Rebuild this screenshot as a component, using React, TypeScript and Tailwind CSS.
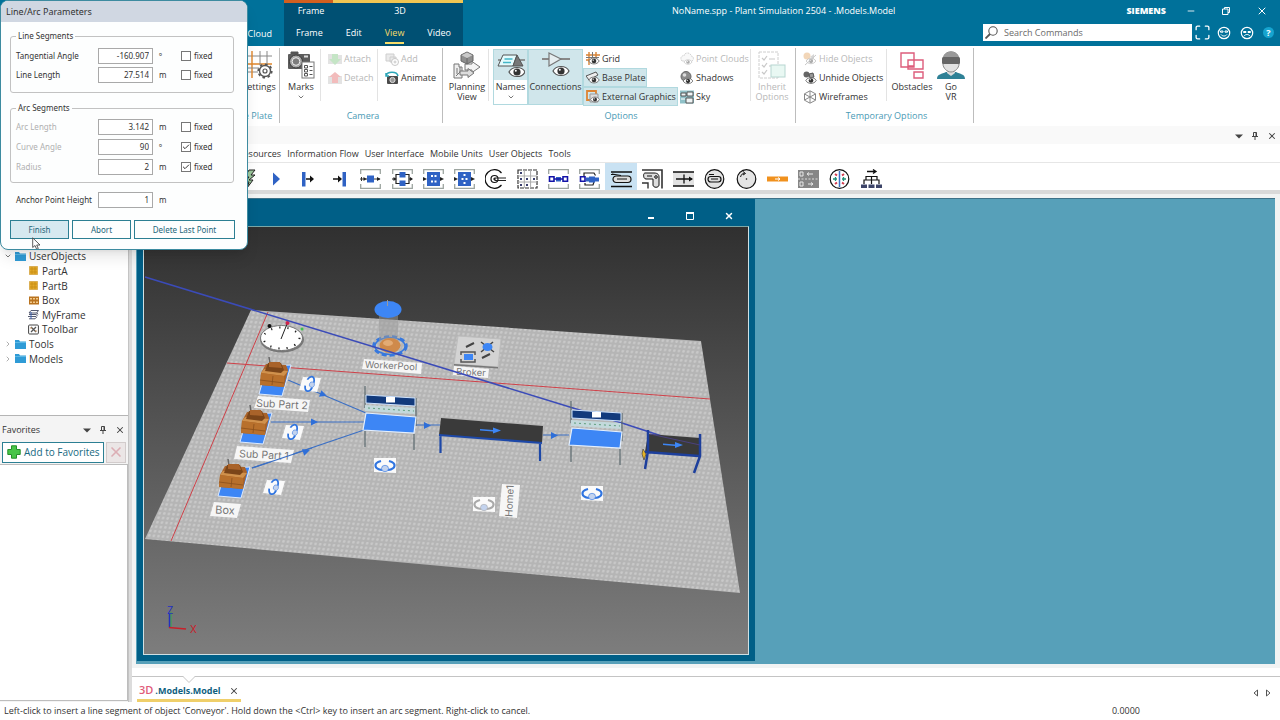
import type { ReactNode } from 'react';
import { Check, ChevronDown, ChevronRight, Maximize, Minus, X } from 'lucide-react';

interface IconProps {
  children: ReactNode;
  className?: string;
  box?: string;
}

const Svg = ({ children, className = 'size-7', box = '0 0 28 28' }: IconProps) => (
  <svg viewBox={box} className={`${className} shrink-0`} fill="none" aria-hidden="true">
    {children}
  </svg>
);

// Eye overlay shared by most of the visibility icons
const Eye = ({ x, y, s = 1 }: { x: number; y: number; s?: number }) => (
  <g transform={`translate(${x} ${y}) scale(${s})`}>
    <path d="M-8 0C-5-6 5-6 8 0C5 6-5 6-8 0Z" fill="#fff" stroke="#555" strokeWidth="1.2" />
    <circle r="3.6" fill="#333" />
    <circle cx="-1.2" cy="-1.2" r="1" fill="#fff" />
  </g>
);

// ---------- Ribbon ----------

const SettingsIcon = () => (
  <Svg>
    <path d="M1 5h26M1 21h12" stroke="#888" />
    <path d="M7 0v27M1 13h26" stroke="#e0862b" strokeWidth="1.4" />
    <path d="M15 0v14M22 0v14M1 17h13" stroke="#888" />
    <circle cx="20" cy="20" r="5.5" fill="#fff" stroke="#555" strokeWidth="1.4" />
    <circle cx="20" cy="20" r="6.8" stroke="#555" strokeWidth="1.6" strokeDasharray="2.6 2.7" />
    <circle cx="20" cy="20" r="2" stroke="#555" strokeWidth="1.2" />
  </Svg>
);

const MarksIcon = () => (
  <Svg>
    <path d="M4 3V1h7v2" fill="#555" stroke="#555" />
    <rect x="1" y="3" width="22" height="15" rx="1" fill="#5c5c5c" />
    <rect x="17" y="4.5" width="4" height="2" fill="#ddd" />
    <circle cx="9" cy="10.5" r="6.5" fill="#a8a8a8" stroke="#3a3a3a" />
    <circle cx="9" cy="10.5" r="3.8" fill="#7c7c7c" stroke="#eee" />
    <rect x="15" y="11" width="12" height="16" fill="#fff" stroke="#777" />
    <path d="M17.5 14.5h3v2.5h-3zM17.5 18.5h3v2.5h-3zM17.5 22.5h3v2.500h-3z" stroke="#555" />
    <path d="M22.5 15.5h3M22.5 19.5h3M22.5 23.5h3" stroke="#555" />
  </Svg>
);

const PlanningIcon = () => (
  <Svg>
    <path d="M1 13h5v3h3v11H1z" fill="#eee" stroke="#777" />
    <path d="M3 25l4-4v-5M4 17v6" stroke="#777" />
    <path d="M12 13h7v-2.5l8 5.500-8 5.500V19h-7z" fill="#f4f4f4" stroke="#777" />
    <path d="M7 20h8v-2.5l6 4.500-6 4.500V24H7z" fill="#ddd" stroke="#777" />
    <path d="M14 1l6 3v6l-6 3-6-3V4z" fill="#8f8f8f" stroke="#666" />
    <path d="M8.500 4.200L14 1.500l5.500 2.700L14 7z" fill="#c9c9c9" />
    <path d="M14 7v6" stroke="#666" />
  </Svg>
);

const NamesIcon = () => (
  <Svg>
    <path d="M1 9h27" stroke="#777" strokeWidth="1.5" />
    <path d="M6 4h14l-4 11H1z" fill="#e4fbfd" stroke="#555" />
    <path d="M7.5 8h8M6 11.5h8" stroke="#43b6c8" strokeWidth="1.3" />
    <path d="M20 4l6 11H16z" fill="#777" stroke="#555" />
    <Eye x={20} y={21} />
  </Svg>
);

const ConnectionsIcon = () => (
  <Svg>
    <path d="M0 8h7M18 8h10" stroke="#888" strokeWidth="2" />
    <path d="M7 2l12 6-12 7z" fill="#e6eef0" stroke="#777" strokeWidth="1.2" />
    <Eye x={19} y={20} />
  </Svg>
);

const InheritIcon = () => (
  <Svg className="size-7 opacity-40">
    <rect x="1" y="1" width="19" height="26" fill="#fff" stroke="#888" strokeDasharray="3 1" />
    <path d="M4 7l2 2 3-4M4 14l2 2 3-4M4 21l2 2 3-4M11 8h6M11 15h3" stroke="#777" strokeWidth="1.2" />
    <rect x="13" y="14" width="14" height="12" fill="#c9efe2" stroke="#4e9c90" />
  </Svg>
);

const ObstaclesIcon = () => (
  <Svg>
    <path d="M3 2h13v14H3zM10 9h15v9H10zM16 9v6h-6M16 21h9v6h-9z" stroke="#dd5c7b" strokeWidth="1.4" />
  </Svg>
);

const VrIcon = () => (
  <Svg>
    <path d="M0 28c0-5 5-5 9-7h10c4 2 9 2 9 7z" fill="#2f8196" />
    <path d="M10 17h8v5l-4 3-4-3z" fill="#ddd" />
    <path d="M6 9c0-11 16-11 16 0v4c0 4-4 8-8 8s-8-4-8-8z" fill="#e2e2e2" stroke="#888" />
    <path d="M6.500 6c1-7 14-7 15 0z" fill="#9a9a9a" />
    <rect x="5" y="6" width="18" height="7" rx="1.5" fill="#666" />
  </Svg>
);

const AttachIcon = () => (
  <Svg className="size-[14px] opacity-40" box="0 0 14 14">
    <path d="M0 2h6v5h3V3h5v9H0z" fill="#bbb" />
    <path d="M4 2h6v5h3l-6 6-6-6h3z" fill="#6fbf73" />
  </Svg>
);

const DetachIcon = () => (
  <Svg className="size-[14px] opacity-40" box="0 0 14 14">
    <path d="M0 5h14v8H0z" fill="#bbb" />
    <path d="M7 1l6 5h-3v6H4V6H1z" fill="#e05a5a" />
  </Svg>
);

const AddIcon = () => (
  <Svg className="size-[14px] opacity-40" box="0 0 14 14">
    <path d="M1 2h8v7H1zM5 5h6v5H5z" fill="#ccc" stroke="#888" />
    <circle cx="10" cy="10" r="3.5" fill="#fff" stroke="#777" />
    <path d="M8.5 10h3M10 8.5v3" stroke="#777" />
  </Svg>
);

const AnimateIcon = () => (
  <Svg className="size-[14px]" box="0 0 14 14">
    <rect x="2" y="5" width="11" height="8" rx="1" fill="#4a4a4a" />
    <circle cx="7.5" cy="9" r="2.6" fill="#999" stroke="#ddd" />
    <path d="M1 5c1-5 11-5 12 0M4 5L1 5V2" stroke="#2ba6b8" strokeWidth="1.5" />
  </Svg>
);

const GridIcon = () => (
  <Svg className="size-[14px]" box="0 0 14 14">
    <path d="M3 0v13M10 0v6M0 3h14M0 8h5" stroke="#d78334" strokeWidth="1.4" />
    <path d="M6.5 0v5M0 5.5h13" stroke="#777" />
    <Eye x={8} y={9} s={0.65} />
  </Svg>
);

const BasePlateIcon = () => (
  <Svg className="size-[14px]" box="0 0 14 14">
    <path d="M0 5l10-4 2 3-9 5z" fill="#eee" stroke="#555" />
    <Eye x={8} y={9} s={0.65} />
  </Svg>
);

const ExternalIcon = () => (
  <Svg className="size-[14px]" box="0 0 14 14">
    <path d="M1 1h9v9H1z" stroke="#dd8432" strokeWidth="1.8" />
    <path d="M4 4h8v8H4z" fill="#ddd" stroke="#999" />
    <Eye x={9} y={9.5} s={0.55} />
  </Svg>
);

const CloudsIcon = () => (
  <Svg className="size-[14px] opacity-40" box="0 0 14 14">
    <path d="M2 9C-1 5 3 3 4 4c0-4 7-4 7 0 3 0 3 4 1 5z" fill="#eee" stroke="#888" strokeDasharray="1.5 1" />
    <Eye x={8} y={10} s={0.5} />
  </Svg>
);

const ShadowsIcon = () => (
  <Svg className="size-[14px]" box="0 0 14 14">
    <circle cx="6" cy="5.5" r="5" fill="#8c8c8c" stroke="#666" />
    <circle cx="4.5" cy="4" r="1.8" fill="#ddd" />
    <Eye x={8} y={10} s={0.6} />
  </Svg>
);

const SkyIcon = () => (
  <Svg className="size-[14px]" box="0 0 14 14">
    <rect width="14" height="13" y=".5" fill="#8fc1c8" />
    <path d="M1 3h5v3H1zM7 2h6v4H7zM6 8h7v5H6z" fill="#eef4f5" stroke="#555" />
    <path d="M1 9h4" stroke="#fff" />
  </Svg>
);

const HideIcon = () => (
  <Svg className="size-[14px] opacity-40" box="0 0 14 14">
    <circle cx="4" cy="4" r="3.5" fill="#e09a50" />
    <path d="M7 5l4-3v5z" fill="#999" />
    <Eye x={8} y={9} s={0.6} />
    <path d="M2 13L13 3" stroke="#777" />
  </Svg>
);

const UnhideIcon = () => (
  <Svg className="size-[14px]" box="0 0 14 14">
    <circle cx="3.5" cy="3.5" r="3" fill="#666" />
    <path d="M6 3l4-1 1 4-4 1z" fill="#999" stroke="#555" />
    <Eye x={8} y={9.5} s={0.65} />
  </Svg>
);

const WireIcon = () => (
  <Svg className="size-[14px]" box="0 0 14 14">
    <path d="M7 .8l5.5 3v6.500L7 13.200l-5.500-3V3.800zM7 7l5.500-3M7 7L1.500 4M7 7v6M7 1v6M1.500 10L7 7l5.500 3" stroke="#888" />
  </Svg>
);

const PinIcon = () => (
  <Svg className="size-2" box="0 0 8 8">
    <path d="M2.500 4.500V.5h3v4M1 4.500h6M4 4.500V8" stroke="currentColor" />
    <path d="M5 .5v4" stroke="currentColor" />
  </Svg>
);

interface SmallItem {
  label: string;
  icon: ReactNode;
  disabled?: boolean;
  active?: boolean;
}

const SmallColumn = ({ items, className }: { items: SmallItem[]; className: string }) => (
  <div className={`flex flex-col items-start ${className}`}>
    {items.map(item => (
      <button
        key={item.label}
        type="button"
        disabled={item.disabled}
        className={`flex h-[19px] items-center gap-[2px] whitespace-nowrap border pr-px pl-[2px] ${
          item.active ? 'border-[#b1d9df] bg-[#d0e6eb]' : 'border-transparent'
        } ${item.disabled ? 'text-[#b8b8b8]' : 'text-[#333]'}`}
      >
        {item.icon}
        {item.label}
      </button>
    ))}
  </div>
);

interface BigButtonProps {
  label: string;
  icon: ReactNode;
  className: string;
  drop?: boolean;
  disabled?: boolean;
}

const BigButton = ({ label, icon, className, drop, disabled }: BigButtonProps) => (
  <button
    type="button"
    disabled={disabled}
    className={`flex h-[56px] flex-col items-center border pt-px text-center leading-[10px] ${className} ${
      disabled ? 'text-[#b8b8b8]' : 'text-[#333]'
    }`}
  >
    {icon}
    <span className="mt-[3px] whitespace-pre">{label}</span>
    {drop && <ChevronDown className="mt-px size-2" />}
  </button>
);

const Divider = ({ className = 'mx-1' }: { className?: string }) => (
  <div className={`h-[52px] w-px shrink-0 bg-[#e3e3e3] ${className}`} />
);

const Group = ({ title, className, children }: { title: string; className: string; children: ReactNode }) => (
  <section className={`flex h-[75px] shrink-0 flex-col justify-between border-r border-[#bdbdbd] pt-px ${className}`}>
    <div className="flex items-start">{children}</div>
    <h2 className="text-center leading-[14px] whitespace-nowrap text-[#4a9ab5]">{title}</h2>
  </section>
);

const Ribbon = () => (
  <div className="flex h-20 overflow-hidden bg-white pt-[2px] pl-[222px] text-[9px]">
    <Group title="Base Plate" className="w-[58px]">
      <BigButton label="Settings" icon={<SettingsIcon />} className="ml-[18px] w-[38px] border-transparent" />
    </Group>
    <Group title="Camera" className="w-[163px] pl-1">
      <BigButton label="Marks" drop icon={<MarksIcon />} className="w-[34px] border-transparent" />
      <Divider className="ml-[2px] mr-1" />
      <SmallColumn
        className="w-[52px]"
        items={[
          { label: 'Attach', icon: <AttachIcon />, disabled: true },
          { label: 'Detach', icon: <DetachIcon />, disabled: true },
        ]}
      />
      <Divider className="mr-1" />
      <SmallColumn
        className="w-[56px]"
        items={[
          { label: 'Add', icon: <AddIcon />, disabled: true },
          { label: 'Animate', icon: <AnimateIcon /> },
        ]}
      />
    </Group>
    <Group title="Options" className="w-[353px] pl-1">
      <BigButton label={'Planning\nView'} icon={<PlanningIcon />} className="w-[40px] border-transparent" />
      <Divider className="ml-px mr-1" />
      <BigButton
        label="Names"
        drop
        icon={<NamesIcon />}
        className="w-[35px] border-[#b1d9df] bg-linear-to-b from-[#d0e6eb] from-55% to-white to-55%"
      />
      <BigButton label="Connections" icon={<ConnectionsIcon />} className="w-[55px] border-[#b1d9df] bg-[#d0e6eb]" />
      <SmallColumn
        className="w-[94px]"
        items={[
          { label: 'Grid', icon: <GridIcon /> },
          { label: 'Base Plate', icon: <BasePlateIcon />, active: true },
          { label: 'External Graphics', icon: <ExternalIcon />, active: true },
        ]}
      />
      <SmallColumn
        className="w-[73px]"
        items={[
          { label: 'Point Clouds', icon: <CloudsIcon />, disabled: true },
          { label: 'Shadows', icon: <ShadowsIcon /> },
          { label: 'Sky', icon: <SkyIcon /> },
        ]}
      />
      <Divider className="mr-px" />
      <BigButton label={'Inherit\nOptions'} disabled icon={<InheritIcon />} className="w-[40px] border-transparent" />
    </Group>
    <Group title="Temporary Options" className="w-[178px] pl-1">
      <SmallColumn
        className="w-[86px]"
        items={[
          { label: 'Hide Objects', icon: <HideIcon />, disabled: true },
          { label: 'Unhide Objects', icon: <UnhideIcon /> },
          { label: 'Wireframes', icon: <WireIcon /> },
        ]}
      />
      <Divider className="mr-1" />
      <BigButton label="Obstacles" icon={<ObstaclesIcon />} className="w-[42px] border-transparent" />
      <BigButton label={'Go\nVR'} icon={<VrIcon />} className="w-[36px] border-transparent" />
    </Group>
  </div>
);

// ---------- Title bar ----------

const tabs = ['Frame', 'Edit', 'View', 'Video'];

const TitleBar = () => (
  <header className="flex h-[46px] bg-[#00719a] text-[9px] text-white">
    <div className="flex w-[284px] shrink-0 items-end justify-end pr-3 pb-1">
      <button type="button" className="leading-[16px]">Cloud</button>
    </div>
    <div className="grid w-[179px] shrink-0 grid-rows-[23px_23px] bg-[#005073]">
      <div className="flex">
        <span className="w-[49px] border-t-[3px] border-[#d35f1f] pl-[5px] text-center leading-[15px]">Frame</span>
        <span className="flex-1 border-t-[3px] border-[#f0c653] pl-1 text-center leading-[15px]">3D</span>
      </div>
      <nav className="flex justify-between px-3">
        {tabs.map(tab => (
          <button
            key={tab}
            type="button"
            className={`mb-[2px] flex items-center border-b-2 ${
              tab === 'View' ? 'border-[#f6dc6a] text-[#f6dc6a]' : 'border-transparent'
            }`}
          >
            {tab}
          </button>
        ))}
      </nav>
    </div>
    <div className="flex min-w-0 flex-1 flex-col">
      <div className="flex h-[22px] items-center justify-end">
        <h1 className="mr-[231px]">NoName.spp - Plant Simulation 2504 - .Models.Model</h1>
        <span className="mr-5 font-extrabold">SIEMENS</span>
        <button type="button" aria-label="Minimize"><Minus className="size-[10px]" strokeWidth={2} /></button>
        <button type="button" aria-label="Restore" className="ml-[26px]">
          <Svg className="size-2" box="0 0 8 8">
            <path d="M.5 2h5.500v5.500H.5zM2.500 2V.5h5V5.500H6" stroke="#fff" />
          </Svg>
        </button>
        <button type="button" aria-label="Close" className="mr-3 ml-[26px]"><X className="size-[12px]" strokeWidth={2} /></button>
      </div>
      <div className="flex items-center justify-end pt-[2px] pr-[6px]">
        <label className="flex h-[17px] w-[209px] items-center gap-[6px] bg-white pl-[2px]">
          <Svg className="size-[13px]" box="0 0 13 13">
            <circle cx="8" cy="5" r="4.2" stroke="#555" strokeWidth="1.1" />
            <path d="M5 8l-4.500 4.500" stroke="#555" strokeWidth="1.8" />
          </Svg>
          <input
            type="text"
            aria-label="Search Commands"
            placeholder="Search Commands"
            className="min-w-0 flex-1 outline-none placeholder:text-[#6b6b6b]"
          />
        </label>
        <button type="button" aria-label="Full screen" className="mx-[2px]"><Maximize className="size-[17px]" strokeWidth={1.8} /></button>
        <button type="button" aria-label="Like" className="ml-1">
          <Svg className="size-[14px]" box="0 0 14 14">
            <circle cx="7" cy="7" r="5.700" stroke="#fff" strokeWidth="1.2" />
            <path d="M3.500 5h2.500v1.200H3.500zM8 5h2.500v1.200H8zM4 8.500c1.500 2 4.500 2 6 0" stroke="#fff" />
          </Svg>
        </button>
        <button type="button" aria-label="Dislike" className="mx-[9px]">
          <Svg className="size-[14px]" box="0 0 14 14">
            <circle cx="7" cy="7" r="5.700" stroke="#fff" strokeWidth="1.2" />
            <path d="M3.500 5.500h2.500v1H3.500zM8 5.500h2.500v1H8zM4 10c1.500-2 4.500-2 6 0" stroke="#fff" />
          </Svg>
        </button>
        <button type="button" className="flex size-[11px] items-center justify-center rounded-full bg-[#16a4cf] font-bold">?</button>
      </div>
    </div>
  </header>
);

// ---------- Object toolbar ----------

const Brackets = () => <path d="M.7 5V.7H20.300V5M.7 15v4.300H20.300V15" stroke="#9da5a0" strokeWidth="1.3" />;
const BLUE = '#2f62c4';

const toolbarIcons: { name: string; art: ReactNode }[] = [
  { name: 'Event', art: <path d="M14 1l6 0-4 5h4l-6 5h4l-6 8 2-6h-4l4-5h-4z" fill="#9bc79b" stroke="#222" /> },
  { name: 'Play', art: <path d="M7 3.500v13l7-6.500z" fill={BLUE} /> },
  {
    name: 'Source',
    art: (
      <>
        <path d="M4 3h3.500v14.500H4z" fill={BLUE} />
        <path d="M8 10h7" stroke="#111" strokeWidth="1.500" />
        <path d="M12 6.500l4 3.500-4 3.500z" fill="#111" />
      </>
    ),
  },
  {
    name: 'Drain',
    art: (
      <>
        <path d="M13.500 3H17v14.500h-3.500z" fill={BLUE} />
        <path d="M4 10h6" stroke="#111" strokeWidth="1.500" />
        <path d="M9 6.500l4 3.500-4 3.500z" fill="#111" />
      </>
    ),
  },
  {
    name: 'Station',
    art: (
      <>
        <Brackets />
        <path d="M0 10h20M1.500 8v4" stroke="#333" />
        <path d="M7 6.500h7v7H7z" fill={BLUE} />
        <path d="M3.500 8l3 2-3 2zM17 8l3.500 2-3.500 2z" fill="#222" />
      </>
    ),
  },
  {
    name: 'ParallelStation',
    art: (
      <>
        <Brackets />
        <path d="M0 10h4M17 10h3M4 5.500h13v9H4z" stroke="#222" strokeWidth="1.200" />
        <path d="M7.500 3h6v5.500h-6zM7.500 11.500h6V17h-6z" fill={BLUE} />
        <path d="M1.500 8l3 2-3 2zM18 8l3 2-3 2z" fill="#222" />
      </>
    ),
  },
  {
    name: 'AssemblyStation',
    art: (
      <>
        <Brackets />
        <path d="M4 3h13v14H4z" fill={BLUE} />
        <path d="M8 6h2v2H8zM11.500 6h2v2h-2zM8 11.500h2v2H8zM11.500 11.500h2v2h-2z" fill="#fff" />
        <path d="M0 8l4 2-4 2zM17 8l4 2-4 2z" fill="#222" />
      </>
    ),
  },
  {
    name: 'DismantleStation',
    art: (
      <>
        <Brackets />
        <path d="M4 3h13v14H4z" fill={BLUE} />
        <path d="M9.500 5h2v2h-2zM9.500 13h2v2h-2zM7.500 9h2v2h-2zM11.500 9h2v2h-2z" fill="#fff" />
        <path d="M0 8l4 2-4 2zM17 8l4 2-4 2z" fill="#222" />
      </>
    ),
  },
  {
    name: 'PickAndPlace',
    art: (
      <>
        <path d="M16.500 4A9.300 9.300 0 1 0 16.500 16" stroke="#111" strokeWidth="1.200" />
        <circle cx="9.500" cy="10" r="3.500" stroke="#111" strokeWidth="1.200" />
        <path d="M9.500 9H21M9.500 11.500H21" stroke="#222" />
        <circle cx="9.500" cy="10" r="1.200" fill="#222" />
      </>
    ),
  },
  {
    name: 'Store',
    art: (
      <>
        <path d="M1 1h19v18H1z" stroke="#333" strokeDasharray="4 1" strokeWidth="1.200" />
        <path d="M7.300 1v18M13.600 1v18M1 7h19M1 13h19" stroke="#aaa" />
        <path d="M3 3h2v2H3zM3 9h2v2H3zM9 9h2v2H9zM16 9h2v2h-2zM3 15h2v2H3zM9 15h2v2H9z" fill="#3a3f6e" />
      </>
    ),
  },
  {
    name: 'Buffer',
    art: (
      <>
        <Brackets />
        <path d="M8 8h5v4.500H8z" fill={BLUE} />
        <path d="M1.500 7.800h4.500v4.500H1.500zM15 7.800h4.500v4.500H15zM6 10h9" stroke="#1414a8" strokeWidth="1.600" />
      </>
    ),
  },
  {
    name: 'Sorter',
    art: (
      <>
        <Brackets />
        <path d="M5 7V4h10l1.500 2.500M15 13l-1 3H6v-2" stroke="#222" strokeWidth="1.200" />
        <path d="M7 8.500h3v-1h6v1h4v4h-4v1h-6v-1H7z" fill={BLUE} />
        <path d="M1.500 7.800H6v4.500H1.500z" stroke="#1414a8" strokeWidth="1.600" />
      </>
    ),
  },
  {
    name: 'Conveyor',
    art: (
      <>
        <path d="M0 3h21M0 17.500h21" stroke="#111" strokeWidth="1.400" />
        <path d="M1 5l9 1.500M0 5.500h4" stroke="#111" />
        <rect x="2" y="7" width="18" height="6.500" rx="3.200" fill="#ddd" stroke="#111" strokeWidth="1.200" />
        <path d="M6 10h10" stroke="#111" />
      </>
    ),
  },
  {
    name: 'AngularConverter',
    art: (
      <>
        <path d="M0 1h20v18.500" stroke="#333" strokeWidth="1.600" />
        <path d="M0 14h6v5.500" stroke="#333" strokeWidth="1.400" />
        <path d="M3 4h9c4 0 5 2 5 4v8c0 3-6 3-6 0v-6H4c-3 0-3-6-1-6z" fill="#ddd" stroke="#111" />
        <path d="M5 7h5" stroke="#111" />
        <circle cx="14" cy="8" r="1.300" stroke="#111" />
      </>
    ),
  },
  {
    name: 'Converter',
    art: (
      <>
        <path d="M0 3h21v14H0z" fill="#e2e2e2" />
        <path d="M0 3h21M0 17h21M3 10h16M11 5.500v9" stroke="#111" strokeWidth="1.300" />
        <path d="M16 7.500l4 2.500-4 2.500z" fill="#111" />
      </>
    ),
  },
  {
    name: 'Turntable',
    art: (
      <>
        <circle cx="10.500" cy="10" r="9.300" fill="#e4e4e4" stroke="#111" strokeWidth="1.200" />
        <rect x="4" y="7.500" width="13" height="5.500" rx="2.700" fill="#ddd" stroke="#111" strokeWidth="1.200" />
        <path d="M5 5.500h5M7 10h7" stroke="#111" />
      </>
    ),
  },
  {
    name: 'Turnplate',
    art: (
      <>
        <circle cx="10.500" cy="10" r="9.300" fill="#e4e4e4" stroke="#111" strokeWidth="1.200" />
        <path d="M4.500 8c1-3 2-3.500 4-3.500M7 2.500l2.500 2-2.500 1.500" stroke="#111" />
        <circle cx="10.500" cy="10" r=".8" fill="#111" />
      </>
    ),
  },
  {
    name: 'Track',
    art: (
      <>
        <path d="M0 7.500h21v5H0z" fill="#f0911e" />
        <path d="M8 10h5M11 8.500l2 1.500-2 1.500" stroke="#fff" />
      </>
    ),
  },
  {
    name: 'TwoLaneTrack',
    art: (
      <>
        <path d="M0 1h21v18H0z" fill="#868686" />
        <path d="M0 10h21" stroke="#ddd" strokeDasharray="2 1.500" />
        <path d="M2 3h3v4H2zM2 13h3v4H2zM10 5h5M10 15h5M11 3.500L9 5l2 1.500M13 13.500l2 1.500-2 1.500" stroke="#e8e8e8" />
      </>
    ),
  },
  {
    name: 'Marker',
    art: (
      <>
        <circle cx="10.500" cy="10" r="9.300" fill="#fff" stroke="#111" strokeWidth="1.200" />
        <path d="M10.500 2v16" stroke="#3b6fc4" strokeWidth="1.500" />
        <path d="M4 10h4M13 10h4M6.500 8v4M14.500 8v4" stroke="#1f8f78" strokeWidth="1.300" />
        <path d="M6 5l2 1.500M15 5l-2 1.500M6 15l2-1.500M15 15l-2-1.500" stroke="#d23b4e" strokeWidth="2" />
      </>
    ),
  },
  {
    name: 'FlowControl',
    art: (
      <>
        <path d="M6 2.500h8M12 .5l3 2-3 2" stroke="#111" strokeWidth="1.300" />
        <path d="M10.500 7v8M3 15v-4h15v4M5 11V7.500h11V11" stroke="#111" strokeWidth="1.200" />
        <path d="M0 15.500h6v3.500H0zM7.500 15.500h6v3.500h-6zM15 15.500h6v3.500h-6z" fill="#3d4468" />
      </>
    ),
  },
];

const categories = ['Resources', 'Information Flow', 'User Interface', 'Mobile Units', 'User Objects', 'Tools'];

const PanelControls = () => (
  <div className="flex items-center gap-2 text-[#444]">
    <button type="button" aria-label="Options">
      <Svg className="size-2" box="0 0 8 8"><path d="M0 2.500h8L4 6.500z" fill="currentColor" /></Svg>
    </button>
    <button type="button" aria-label="Pin"><PinIcon /></button>
    <button type="button" aria-label="Close"><X className="size-[10px]" strokeWidth={2.5} /></button>
  </div>
);

const Toolbox = () => (
  <div>
    <div className="flex h-[18px] justify-end bg-[#f9f9f9] pt-px pr-[3px]">
      <PanelControls />
    </div>
    <div className="flex h-[19px] items-end gap-[6px] border-b border-[#e6e6e6] bg-white pl-[238px] text-[9px] text-[#333]">
      {categories.map(category => (
        <button key={category} type="button" className="leading-[16px]">{category}</button>
      ))}
    </div>
    <div className="flex h-[27px] bg-white pl-[230px]">
      <div className="flex w-[657px]">
        {toolbarIcons.map(({ name, art }) => (
          <button
            key={name}
            type="button"
            aria-label={name}
            className={`flex flex-1 items-center justify-center pt-[5px] ${name === 'Conveyor' ? 'bg-[#c9e2f3]' : ''}`}
          >
            <Svg className="h-5 w-[21px]" box="0 0 21 20">{art}</Svg>
          </button>
        ))}
      </div>
    </div>
    <div className="h-1 bg-[#d9d9d9]" />
  </div>
);

// ---------- Left side ----------

const FolderIcon = () => (
  <Svg className="h-[9px] w-[11px]" box="0 0 11 9">
    <path d="M0 0h4l1 1.500h6V9H0z" fill="#2f9bd6" />
    <path d="M0 2.500h11" stroke="#5cb8e6" />
  </Svg>
);

const PartIcon = () => (
  <Svg className="size-[9px]" box="0 0 9 9">
    <path d="M.5.5h8v8h-8z" fill="#e2a92a" stroke="#c48a12" strokeDasharray="1 1" />
    <path d="M3 1v7M6 1v7M1 3h7M1 6h7" stroke="#c48a12" strokeWidth=".7" />
  </Svg>
);

const BoxIcon = () => (
  <Svg className="h-[9px] w-[10px]" box="0 0 10 9">
    <path d="M0 .5h10v8H0z" fill="#b9731f" />
    <path d="M1 2h2v1.500H1zM4 2h2v1.500H4zM7 2h2v1.500H7zM1 5.500h2V7H1zM4 5.500h2V7H4zM7 5.500h2V7H7z" fill="#f2c98a" />
  </Svg>
);

const FrameIcon = () => (
  <Svg className="size-[11px]" box="0 0 11 11">
    <path d="M3 1.500h7.500L8.500 4H1zM1 5.500h7l2-1.500M0 7.500h8l2-2M1 9.800h6l2-2" stroke="#555a70" />
    <path d="M3 3v7" stroke="#3e62b0" />
  </Svg>
);

const ToolbarIcon = () => (
  <Svg className="size-[11px]" box="0 0 11 11">
    <rect x=".6" y="1" width="9.800" height="9" rx="1" stroke="#444" />
    <path d="M3 3l5 5M8 3L3 8" stroke="#555" strokeWidth="1.300" />
    <path d="M2 4h2M7 7h2" stroke="#c96" />
  </Svg>
);

interface TreeItem {
  label: string;
  icon: ReactNode;
  folder?: boolean;
  open?: boolean;
}

const tree: TreeItem[] = [
  { label: 'UserObjects', icon: <FolderIcon />, folder: true, open: true },
  { label: 'PartA', icon: <PartIcon /> },
  { label: 'PartB', icon: <PartIcon /> },
  { label: 'Box', icon: <BoxIcon /> },
  { label: 'MyFrame', icon: <FrameIcon /> },
  { label: 'Toolbar', icon: <ToolbarIcon /> },
  { label: 'Tools', icon: <FolderIcon />, folder: true },
  { label: 'Models', icon: <FolderIcon />, folder: true },
];

const Sidebar = () => (
  <aside className="flex w-[129px] shrink-0 flex-col border-r border-[#c4c4c4] bg-[#f4f4f4] text-[#333]">
    <ul className="flex h-[222px] flex-col border-b border-[#b5b5b5] bg-white pt-[55px] pb-[49px] text-[10px]">
      {tree.map(item => (
        <li key={item.label} className={`flex flex-1 items-center gap-[3px] ${item.folder ? 'pl-1' : 'pl-7'}`}>
          {item.folder &&
            (item.open ? <ChevronDown className="size-2" /> : <ChevronRight className="size-2 text-[#888]" />)}
          <span className="flex w-[11px] justify-center">{item.icon}</span>
          <span className="leading-[14px]">{item.label}</span>
        </li>
      ))}
    </ul>
    <div className="mt-1 flex h-5 items-center justify-between pr-[3px] pl-[2px]">
      <h2 className="text-[9px]">Favorites</h2>
      <PanelControls />
    </div>
    <div className="flex h-6 items-center gap-[2px] pl-[2px]">
      <button
        type="button"
        className="flex h-[21px] w-[102px] items-center gap-[3px] border border-[#2c7f93] bg-white pl-1 text-[10px] whitespace-nowrap text-[#16697f]"
      >
        <Svg className="size-[14px]" box="0 0 14 14">
          <path d="M4.500.8h5v3.700h3.700v5H9.500v3.700h-5V9.500H.8v-5h3.700z" fill="#48c548" stroke="#258f2a" />
        </Svg>
        Add to Favorites
      </button>
      <button type="button" aria-label="Remove" disabled className="flex h-[21px] w-5 items-center justify-center border border-[#d2cccc] bg-[#ebe6e6]">
        <X className="size-4 shrink-0 text-[#dcaeb4]" strokeWidth={2.5} />
      </button>
    </div>
    <div className="mb-px flex-1 border border-l-0 border-[#bdbdbd] bg-white" />
  </aside>
);

// ---------- 3D scene ----------

const Machine = ({ x, y }: { x: number; y: number }) => (
  <g transform={`translate(${x} ${y})`}>
    <path d="M-7-10l24-1L8 20l-23-2z" fill="#3d86f5" stroke="#dceaff" />
    <path d="M-5-19l1 6" stroke="#666" strokeWidth="1.500" />
    <path d="M-13-3l5-9 20 1 2 5-4 17-24-2z" fill="#a9632a" />
    <path d="M-13-3l3-4 24 2-4 5z" fill="#d0914c" />
    <path d="M-13-3l23 3v11l-24-2z" fill="#b8702c" />
    <path d="M-6-13h13l3 7-3 3-16-2z" fill="#7b4519" />
    <path d="M-5-14h11l2 6-13-1z" fill="#a9632a" />
    <path d="M-1 0l-1 9M-14 4l24 3" stroke="#8a4f1c" strokeWidth=".8" />
  </g>
);

interface WorkerProps {
  x: number;
  y: number;
  turned?: boolean;
  color?: string;
}

const Worker = ({ x, y, turned, color = '#2f74e0' }: WorkerProps) => (
  <g transform={`translate(${x} ${y})`}>
    <path d={turned ? 'M-7-7l18 1-4 14-18-2z' : 'M-11-8h22v15l-22-1z'} fill="#fafafa" />
    <g transform={turned ? 'rotate(-70) scale(.8)' : ''}>
      <path d="M-4-5c-8 2-7 8 1 9M4-5c8 2 7 8-1 9" fill="none" stroke={color} strokeWidth="2.200" />
      <ellipse cy="2.500" rx="3.500" ry="3.200" fill="#c3d3ee" stroke={color} strokeWidth=".6" />
    </g>
  </g>
);

const Station = ({ x, y }: { x: number; y: number }) => (
  <g transform={`translate(${x} ${y})`}>
    <path d="M0-8v22M51 4v28M0 37v16M49 40v16" stroke="#5d6b70" strokeWidth="1.200" />
    <path d="M1 1l49 3v8L1 9z" fill="#123a7c" stroke="#cfe4ff" />
    <path d="M21 3h9v5.500h-9z" fill="#fff" />
    <path d="M0 11l50 3v6L0 17z" fill="#c3d9dc" />
    <path d="M3 14l46 3" stroke="#5f9e7c" strokeDasharray="2 3" />
    <path d="M1 19l50 4-2 16-51-3z" fill="#3d86f5" stroke="#e4f0ff" strokeWidth="1.200" />
  </g>
);

const Tip = ({ x, y, turn = 0 }: { x: number; y: number; turn?: number }) => (
  <path d="M-3-3.500L4 0l-7 3.500z" fill="#2f6fd8" transform={`translate(${x} ${y}) rotate(${turn})`} />
);

const labelText = 'fill-[#777] font-[Inter]';

const Scene = () => (
  <svg
    viewBox="144 227 604 427"
    preserveAspectRatio="xMidYMid slice"
    className="min-h-0 w-full flex-1"
    role="img"
    aria-label="3D model view"
  >
    <defs>
      <linearGradient id="backdrop" x1="0" y1="0" x2="0" y2="1">
        <stop offset="0" stopColor="#303030" />
        <stop offset="1" stopColor="#7d7d7d" />
      </linearGradient>
      <pattern id="studs" width="4.6" height="4.6" patternUnits="userSpaceOnUse" patternTransform="rotate(4.5) skewX(-10)">
        <rect width="4.6" height="4.6" fill="#b5b5b5" />
        <rect x="1" y="1" width="2.6" height="2.6" rx="1" fill="#c9c9c9" />
      </pattern>
    </defs>
    <rect x="144" y="227" width="604" height="427" fill="url(#backdrop)" />
    <path d="M251 310l450 31 39 252-595-54z" fill="url(#studs)" />
    <path d="M268 312l-97 229M227 363l483 36" stroke="#cf4048" strokeWidth="1" fill="none" />

    {/* event controller */}
    <ellipse cx="282" cy="339.5" rx="22" ry="13" fill="#777" />
    <ellipse cx="281.5" cy="338" rx="21" ry="12.5" fill="#fff" stroke="#777" />
    <ellipse cx="281.5" cy="338" rx="18" ry="10.5" fill="none" stroke="#222" strokeWidth="2" strokeDasharray="1.2 7" />
    <path d="M281 339l6-15" stroke="#222" />
    <circle cx="269.5" cy="326" r="2" fill="#111" />
    <circle cx="287.500" cy="323" r="2" fill="#d1204a" />
    <circle cx="302" cy="329" r="1.5" fill="#3ec44d" />

    {/* worker pool */}
    <ellipse cx="390" cy="346" rx="15" ry="8.5" fill="none" stroke="#3678de" strokeWidth="1.500" />
    <ellipse cx="390" cy="346" rx="16.500" ry="9.500" fill="none" stroke="#3678de" strokeWidth="2.500" strokeDasharray="5 3" />
    <path d="M379 313h19v29h-19z" fill="#9a9a9a" opacity=".5" />
    <ellipse cx="390" cy="345.5" rx="10.5" ry="7.5" fill="#cf8a4b" />
    <ellipse cx="388" cy="343" rx="5" ry="3" fill="#e3ab74" />
    <ellipse cx="388" cy="309.5" rx="13.500" ry="8.500" fill="#3d86f5" />
    <path d="M387.500 300v6" stroke="#9a9a9a" />
    <path d="M364 359l58 4-1 11-59-5z" fill="#f6f6f6" />
    <text x="391" y="369" fontSize="9.5" textAnchor="middle" transform="rotate(3 391 366)" className={labelText}>WorkerPool</text>

    {/* broker */}
    <path d="M458 336l43 3-3 28-44-3z" fill="#d3d3d3" stroke="#bdbdbd" />
    <path d="M454 364l44 3v1.500l-44-3z" fill="#777" />
    <path d="M466 347l8-4M490 354l-8 4" stroke="#444" strokeWidth="2" />
    <path d="M481 342l13 10M493 342l-12 10" stroke="#444" strokeWidth="1.500" />
    <ellipse cx="487.5" cy="347" rx="5" ry="4" fill="#3d86f5" />
    <path d="M461 355v-3h14v3M461 359v3h14v-3" stroke="#555" strokeWidth="1.5" fill="none" />
    <path d="M464 354h9v6h-9z" fill="#3d86f5" />
    <path d="M454 366l35 3-1 9-35-3z" fill="#f6f6f6" />
    <text x="471" y="375.500" fontSize="9.5" textAnchor="middle" transform="rotate(3 471 372)" className={labelText}>Broker</text>

    <path d="M145 277l275 84 153 47 52 16 52 17" stroke="#3b4bb8" strokeWidth="1.5" fill="none" />

    {/* connectors */}
    <path d="M288 380l78 33M271 422h94M252 468l112-38M416 425h24M543 435h26" stroke="#3b6fc4" strokeWidth="1.2" fill="none" />

    <Machine x={274} y={376} />
    <Machine x={255} y={424} />
    <Machine x={233} y={478} />

    <path d="M258 396l52 4-2 12-54-4z" fill="#f6f6f6" />
    <text x="282" y="408" fontSize="10.5" textAnchor="middle" transform="rotate(3 282 404)" className={labelText}>Sub Part 2</text>
    <path d="M237 446l57 4-3 13-57-4z" fill="#f6f6f6" />
    <text x="264" y="458.500" fontSize="10.5" textAnchor="middle" transform="rotate(3 264 454)" className={labelText}>Sub Part 1</text>
    <path d="M214 502l27 2-4 14-27-2z" fill="#f6f6f6" />
    <text x="225" y="514" fontSize="11" textAnchor="middle" transform="rotate(3 225 510)" className={labelText}>Box</text>
    <path d="M252 468l60-20" stroke="#3b6fc4" strokeWidth="1.2" />

    <Tip x={323} y={394.5} turn={20} />
    <Tip x={314} y={422} />
    <Tip x={306} y={451.500} turn={-18} />
    <Tip x={427} y={425.500} />
    <Tip x={554} y={435.500} />

    <Worker x={310} y={384} turned />
    <Worker x={293} y={432} turned />
    <Worker x={274} y={487} turned />
    <Worker x={385} y={466} />
    <Worker x={592} y={494} />
    <Worker x={484} y={505} color="#a9a9a9" />

    <path d="M502 484l18 1-3 33-18-2z" fill="#f6f6f6" />
    <text x="510" y="504" fontSize="10" textAnchor="middle" transform="rotate(-87 510 501)" className={labelText}>Home1</text>

    <Station x={365} y={394} />
    <Station x={571} y={409} />

    {/* conveyors */}
    <path d="M441 418l102 8-1 17-103-8z" fill="#3a3a3a" />
    <path d="M439 435l103 8M440.500 436v17M540 444v17" stroke="#1d48a8" strokeWidth="2.200" fill="none" />
    <path d="M480 429l13 1v-2.500l8 3-8 3v-2l-13-1z" fill="#3d86f5" />
    <path d="M648 434l52 4-1 18-54-4z" fill="#3a3a3a" />
    <path d="M648 430v21l-3 18M700 434v22l-6 17M645 452l54 4" stroke="#1d3f9c" strokeWidth="2.500" fill="none" />
    <path d="M650 434l50 11" stroke="#4a4180" />
    <path d="M663 443.500l12 1v-2.500l8 3-8 3v-2l-12-1z" fill="#3d86f5" />
    <path d="M643 449l3 5-2 6-2-6z" fill="#e6b428" stroke="#333" strokeWidth=".6" />

    {/* axes */}
    <path d="M171 612v15" stroke="#2fae4a" />
    <path d="M169.500 614v13.500" stroke="#2330c0" strokeWidth="1.5" />
    <path d="M169 627.500l17 1.500" stroke="#c8202a" strokeWidth="1.5" />
    <text x="167" y="614" fontSize="10" className="fill-[#2330c0] font-[Inter]">Z</text>
    <text x="190" y="633" fontSize="10" className="fill-[#c8202a] font-[Inter]">X</text>
  </svg>
);

const ModelWindow = () => (
  <section className="ml-px flex w-[618px] shrink-0 flex-col bg-[#005f87] px-[6px] pb-[6px]">
    <div className="flex h-[27px] items-center justify-end gap-[29px] pt-[6px] pr-[15px] text-white">
      <button type="button" aria-label="Minimize window">
        <Svg className="size-[10px]" box="0 0 10 10"><path d="M2 7h6" stroke="#fff" strokeWidth="2" /></Svg>
      </button>
      <button type="button" aria-label="Maximize window">
        <Svg className="size-[10px]" box="0 0 10 10">
          <path d="M1.500 2h7v6.500h-7z" stroke="#fff" />
          <path d="M1 2h8" stroke="#fff" strokeWidth="2" />
        </Svg>
      </button>
      <button type="button" aria-label="Close window"><X className="size-[10px]" strokeWidth={3.5} /></button>
    </div>
    <div className="flex flex-1 flex-col border border-[#cfe0e4] border-t-[#7aa7a7]">
      <Scene />
    </div>
  </section>
);

// ---------- Parameters dialog ----------

interface FieldProps {
  id: string;
  label: string;
  value: string;
  unit: string;
  fixed?: boolean;
  muted?: boolean;
}

const Field = ({ id, label, value, unit, fixed, muted }: FieldProps) => (
  <div className="flex h-4 items-center">
    <label htmlFor={id} className={`w-[82px] whitespace-nowrap ${muted ? 'text-[#b0b0b0]' : ''}`}>{label}</label>
    <input
      id={id}
      type="text"
      defaultValue={value}
      className="h-4 w-[55px] border border-[#a9a9a9] bg-white pr-[3px] pb-px text-right outline-none"
    />
    <span className="w-7 pl-[6px]">{unit}</span>
    {fixed !== undefined && (
      <label className="flex items-center gap-[3px]">
        <span className="grid size-[10px] place-items-center">
          <input
            type="checkbox"
            defaultChecked={fixed}
            className="peer col-start-1 row-start-1 size-[10px] appearance-none border border-[#777] bg-white"
          />
          <Check className="pointer-events-none col-start-1 row-start-1 hidden size-2 peer-checked:block" strokeWidth={3} />
        </span>
        fixed
      </label>
    )}
  </div>
);

const dialogButton = 'h-[19px] border border-[#2c7f93] text-[#24667a]';
const fieldset = 'mr-px rounded-[3px] border border-[#c2c2c2] pl-[5px]';

const ParametersDialog = () => (
  <div
    role="dialog"
    aria-label="Line/Arc Parameters"
    className="absolute top-0 left-0 w-[248px] overflow-hidden rounded-lg border border-[#3d8ba0] bg-[#fdfefe] font-['Noto_Sans','Open_Sans',sans-serif] text-[8px] text-[#333] shadow-lg"
  >
    <h2 className="h-[21px] bg-[#d0d7e2] pl-[5px] text-[9px] leading-[21px]">Line/Arc Parameters</h2>
    <div className="pt-[9px] pr-3 pb-[10px] pl-[9px]">
      <fieldset className={`${fieldset} pb-[9px]`}>
        <legend className="px-[2px] leading-[10px]">Line Segments</legend>
        <div className="flex flex-col gap-[3px] pt-[7px]">
          <Field id="angle" label="Tangential Angle" value="-160.907" unit="º" fixed={false} />
          <Field id="length" label="Line Length" value="27.514" unit="m" fixed={false} />
        </div>
      </fieldset>
      <fieldset className={`${fieldset} mt-[10px] pb-[7px]`}>
        <legend className="px-[2px] leading-[10px]">Arc Segments</legend>
        <div className="flex flex-col gap-1 pt-[6px]">
          <Field id="arc" label="Arc Length" value="3.142" unit="m" fixed={false} muted />
          <Field id="curve" label="Curve Angle" value="90" unit="º" fixed muted />
          <Field id="radius" label="Radius" value="2" unit="m" fixed muted />
        </div>
      </fieldset>
      <div className="mt-[9px] pl-[6px]">
        <Field id="anchor" label="Anchor Point Height" value="1" unit="m" />
      </div>
      <div className="mt-3 flex gap-[3px]">
        <button type="button" className={`${dialogButton} w-[59px] bg-[#d6e9f0]`}>Finish</button>
        <button type="button" className={`${dialogButton} w-[59px]`}>Abort</button>
        <button type="button" className={`${dialogButton} w-[101px]`}>Delete Last Point</button>
      </div>
    </div>
    <svg viewBox="0 0 9 13" className="absolute top-[236px] left-[31px] h-[13px] w-[9px]" aria-hidden="true">
      <path d="M.7.8v9.700l2.300-2 1.700 3.800 1.600-.8L4.700 8H8z" fill="#fff" stroke="#333" strokeWidth=".8" />
    </svg>
  </div>
);

// ---------- Page ----------

export default function App() {
  return (
    <div className="relative flex min-h-screen flex-col bg-[#f1f3f3] font-['Open_Sans','Noto_Sans',sans-serif]">
      <TitleBar />
      <Ribbon />
      <Toolbox />
      <div className="flex flex-1">
        <Sidebar />
        <div className="w-[3px] shrink-0 bg-[#dcdcdc]" />
        <main className="flex min-w-0 flex-1 flex-col">
          <div className="mt-1 mr-[5px] mb-1 ml-1 flex flex-1 border-t border-[#3f7188] bg-[#57a0b9] pb-[3px]">
            <ModelWindow />
          </div>
          <div className="bg-white pt-2">
            <div className="flex h-[26px] items-end justify-between border-t border-[#c4c4c4] pr-[9px] pl-[5px]">
              <div className="relative flex h-[21px] items-center border-b-[3px] border-[#efcf6a] pt-px pl-[2px] text-[10px]">
                <svg viewBox="0 0 12 7" className="absolute -top-[5px] left-[46px] h-[7px] w-3" aria-hidden="true">
                  <path d="M0 0h12L6 6.500z" fill="#fff" />
                  <path d="M0 .5l6 6 6-6" fill="none" stroke="#c4c4c4" />
                </svg>
                <a href="#model" className="flex items-center gap-[2px]">
                  <span className="text-[11px] font-semibold text-[#e05a78]">3D</span>
                  <span className="text-[9px] font-bold text-[#105f80]">.Models.Model</span>
                </a>
                <button type="button" aria-label="Close tab" className="mr-[2px] ml-2"><X className="size-[10px] text-[#444]" strokeWidth={2.5} /></button>
              </div>
              <div className="flex gap-[6px] pb-[5px]">
                <button type="button" aria-label="Previous tab"><Svg className="h-2 w-[6px]" box="0 0 6 8"><path d="M4.500 1v6L1 4z" stroke="#555" /></Svg></button>
                <button type="button" aria-label="Next tab"><Svg className="h-2 w-[6px]" box="0 0 6 8"><path d="M1.500 1v6L5 4z" stroke="#555" /></Svg></button>
              </div>
            </div>
          </div>
        </main>
      </div>
      <footer className="flex h-[18px] items-center justify-between bg-white pr-[140px] pl-1 text-[9px] text-[#333]">
        <p>Left-click to insert a line segment of object 'Conveyor'. Hold down the &lt;Ctrl&gt; key to insert an arc segment. Right-click to cancel.</p>
        <span>0.0000</span>
      </footer>
      <ParametersDialog />
    </div>
  );
}
